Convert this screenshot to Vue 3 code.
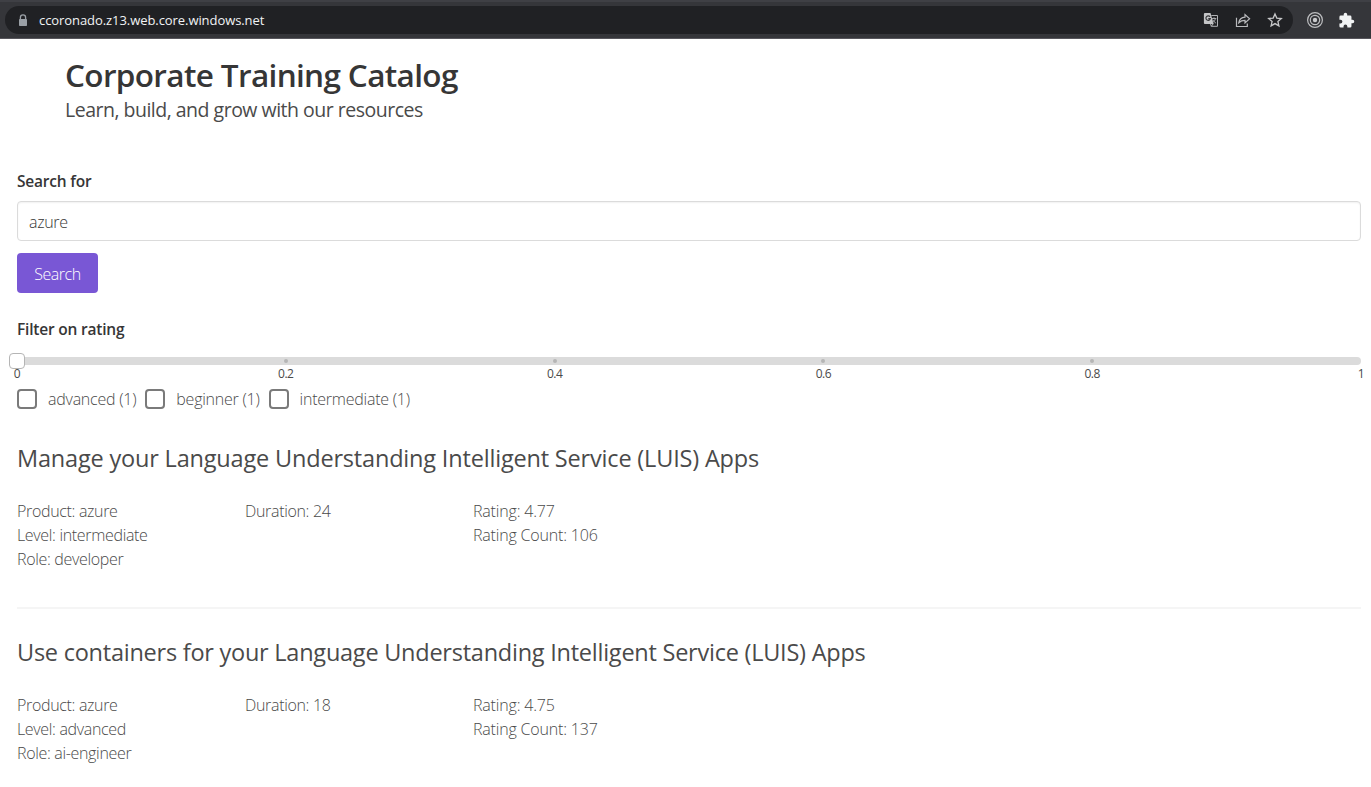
<script setup>
const marks = ['0', '0.2', '0.4', '0.6', '0.8', '1']
const levels = ['advanced (1)', 'beginner (1)', 'intermediate (1)']
const courses = [
  {
    title: 'Manage your Language Understanding Intelligent Service (LUIS) Apps',
    columns: [
      ['Product: azure', 'Level: intermediate', 'Role: developer'],
      ['Duration: 24'],
      ['Rating: 4.77', 'Rating Count: 106'],
    ],
  },
  {
    title: 'Use containers for your Language Understanding Intelligent Service (LUIS) Apps',
    columns: [
      ['Product: azure', 'Level: advanced', 'Role: ai-engineer'],
      ['Duration: 18'],
      ['Rating: 4.75', 'Rating Count: 137'],
    ],
  },
]
</script>

<template>
  <div class="window">
    <header class="toolbar">
      <div class="address">
        <svg class="lock" width="10" height="13" viewBox="0 0 10 13">
          <path d="M2.4 5.5V3.4a2.6 2.6 0 0 1 5.2 0v2.1" fill="none" stroke="#9aa0a6" stroke-width="1.3" />
          <rect x="1" y="5" width="8" height="7" rx=".8" fill="#9aa0a6" />
        </svg>
        <span class="url">ccoronado.z13.web.core.windows.net</span>
        <div class="actions">
          <svg width="16" height="16" viewBox="0 0 16 16">
            <path d="M1.900 1h5.600l3.100 11H1.900a1 1 0 0 1-1-1V2a1 1 0 0 1 1-1z" fill="#c4c5c7" />
            <path d="M7 4.900A2.200 2.200 0 1 0 7.300 6.600H5.300" fill="none" stroke="#37383b" stroke-width="1.200" />
            <path d="M8.300 3.500h6.200v10.800H8.300l2-2.600M8.300 14.300l-.8-2.500" fill="none" stroke="#b0b1b4" stroke-width="1" />
            <path d="M9 6.500h4.300M11 5.300v1.200M12.500 6.500q-.5 2.400-2.600 4M9.700 7.700q1.200 2.200 3.300 3.500" fill="none" stroke="#b0b1b4" stroke-width=".9" />
          </svg>
          <svg width="16" height="16" viewBox="0 0 16 16">
            <path d="M1.500 5.800v8.700h10.800v-3.100" fill="none" stroke="#b9babd" stroke-width="1.200" />
            <path d="M3.800 10.700C4.300 7.600 6.400 5.400 10 5.200V2.600l4.600 4.200L10 10.900V8.400c-2.700 0-4.500.7-6.200 2.300z" fill="none" stroke="#b9babd" stroke-width="1.200" />
          </svg>
          <svg width="16" height="16" viewBox="0 0 16 16">
            <path d="M8 1.900l1.800 4.200 4.500.4-3.400 3 1 4.400L8 11.600l-3.900 2.300 1-4.400-3.400-3 4.500-.4z" fill="none" stroke="#c6c7c9" stroke-width="1.300" />
          </svg>
        </div>
      </div>
      <svg class="target" width="18" height="18" viewBox="0 0 18 18" fill="none" stroke="#bdbec0">
        <circle cx="9" cy="9" r="7.400" stroke-width="1.200" />
        <circle cx="9" cy="9" r="4.700" stroke-width="1.200" />
        <circle cx="9" cy="9" r="2.200" fill="#c9cacc" stroke="none" />
      </svg>
      <svg class="puzzle" width="17" height="17" viewBox="0 0 24 24">
        <path d="M20.500 11H19V7a2 2 0 0 0-2-2h-4V3.500a2.500 2.500 0 0 0-5 0V5H4a2 2 0 0 0-2 2v3.800h1.500a2.700 2.700 0 0 1 0 5.400H2V20a2 2 0 0 0 2 2h3.800v-1.500a2.700 2.700 0 0 1 5.400 0V22H17a2 2 0 0 0 2-2v-4h1.500a2.500 2.500 0 0 0 0-5z" fill="#f1f3f4" />
      </svg>
    </header>

    <div class="hero">
      <h1>Corporate Training Catalog</h1>
      <p>Learn, build, and grow with our resources</p>
    </div>

    <main>
      <label class="label search-label" for="query">Search for</label>
      <input id="query" class="query" type="text" value="azure" />
      <button class="submit" type="button">Search</button>

      <div class="label filter-label">Filter on rating</div>
      <div class="slider">
        <div class="track">
          <i v-for="mark in marks" :key="mark" class="stop" />
          <span class="thumb" />
        </div>
        <div class="marks">
          <span v-for="mark in marks" :key="mark" class="mark"><b>{{ mark }}</b></span>
        </div>
      </div>

      <div class="levels">
        <label v-for="level in levels" :key="level" class="level">
          <span class="box" />{{ level }}
        </label>
      </div>

      <article v-for="course in courses" :key="course.title" class="course">
        <h2>{{ course.title }}</h2>
        <div class="details">
          <div v-for="(lines, i) in course.columns" :key="i">
            <p v-for="line in lines" :key="line">{{ line }}</p>
          </div>
        </div>
      </article>
    </main>
  </div>
</template>

<style>
html, body { margin: 0; background: #fff; overflow: hidden; }
</style>

<style scoped>
* { box-sizing: border-box; }
h1, h2, p { margin: 0; }
.window {
  height: 787px;
  overflow: hidden;
  font: 300 16px/24px "Open Sans", "Noto Sans", sans-serif;
  color: #4a4a4a;
}
.toolbar {
  height: 39px;
  padding: 2px 15px 0 5px;
  display: flex;
  align-items: center;
  background: #35363a;
  border-top: 2px solid #3f4045;
  border-bottom: 1px solid #57565c;
}
.address {
  width: 1288px;
  flex: none;
  height: 28px;
  margin-top: -2px;
  padding: 0 10px 0 13px;
  display: flex;
  align-items: center;
  border-radius: 14px;
  background: #202124;
}
.url {
  margin-left: 11px;
  font-size: 13px;
  font-weight: 400;
  letter-spacing: -.07px;
  color: #f1f3f4;
}
.actions { margin-left: auto; display: flex; gap: 16px; }
.actions svg { display: block; }
.target { flex: none; margin: -2px 0 0 13px; }
.puzzle { flex: none; margin: -2px 0 0 14px; }

.hero { padding: 18px 65px 0; height: 131px; }
.hero h1 { font-size: 31.5px; line-height: 36px; font-weight: 600; letter-spacing: -.65px; color: #363636; }
.hero p { margin-top: 4px; font-size: 19.5px; line-height: 25px; font-weight: 400; letter-spacing: -.5px; }

main { padding: 0 10px 0 17px; }
.label { display: block; font-weight: 600; font-size: 15.5px; letter-spacing: -.2px; color: #363636; }
.search-label { margin-top: -1px; }
.query {
  display: block;
  width: 100%;
  height: 40px;
  margin-top: 8px;
  padding: 2px 11px 0;
  border: 1px solid #dbdbdb;
  border-radius: 4px;
  box-shadow: inset 0 1px 2px rgba(10, 10, 10, .06);
  font: inherit;
  letter-spacing: -.35px;
  color: #363636;
}
.submit {
  display: block;
  width: 81px;
  height: 40px;
  margin-top: 12px;
  padding: 1px 0 0;
  border: 0;
  border-radius: 4px;
  background: #7957d5;
  color: #fff;
  font: inherit;
  letter-spacing: -.45px;
}
.filter-label { margin-top: 24px; }
.slider { padding-top: 16px; }
.track {
  position: relative;
  height: 8px;
  display: flex;
  align-items: center;
  justify-content: space-between;
  border-radius: 4px;
  background: #dbdbdb;
}
.stop { width: 4px; height: 4px; margin: 0 -2px; border-radius: 2px; background: #b5b5b5; }
.stop:first-child, .stop:nth-child(6) { visibility: hidden; }
.thumb {
  position: absolute;
  left: -8px;
  top: -4px;
  width: 16px;
  height: 16px;
  border: 1px solid #b5b5b5;
  border-radius: 4px;
  background: #fff;
}
.marks { height: 17px; display: flex; justify-content: space-between; }
.mark { width: 0; display: flex; justify-content: center; }
.mark b { font-size: 12px; line-height: 17px; font-weight: 400; letter-spacing: -.5px; }

.levels { margin-top: 5px; display: flex; gap: 9px; letter-spacing: -.24px; }
.level { display: flex; align-items: center; height: 24px; white-space: nowrap; }
.box { width: 20px; height: 20px; margin-right: 11px; border: 2px solid #7a7a7a; border-radius: 4px; }

.course { height: 166px; margin-top: 29px; }
.course:first-of-type { height: 169px; border-bottom: 2px solid #f5f5f5; }
.course + .course { margin-top: 25px; }
h2 { font-size: 23.5px; line-height: 36px; font-weight: 400; letter-spacing: -.18px; }
.course + .course h2 { letter-spacing: -.24px; }
.details { margin-top: 23px; display: flex; letter-spacing: -.33px; }
.details > div { width: 228px; }
.details > div:last-child { letter-spacing: -.18px; }
</style>
